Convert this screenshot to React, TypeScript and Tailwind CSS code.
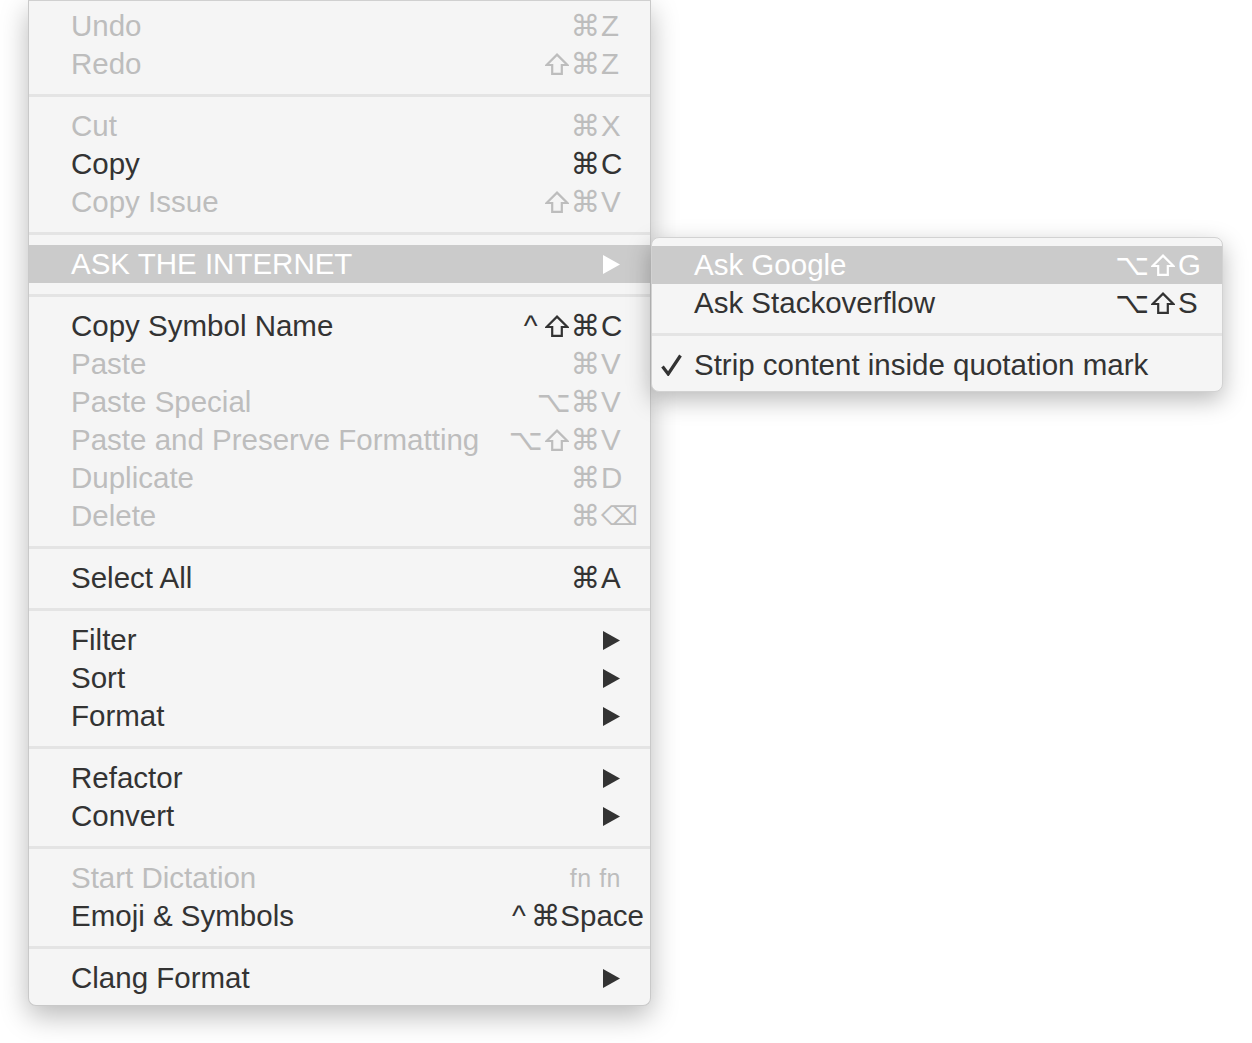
import React from "react";

type Item = {
  label: string;
  mods?: string;
  keyc?: string;
  dis?: boolean;
  arrow?: boolean;
  hi?: boolean;
  keyCls?: string;
  check?: boolean;
};

const FONT = "font-['Liberation_Sans','DejaVu_Sans',sans-serif]";

const mainGroups: Item[][] = [
  [
    { label: "Undo", mods: "⌘", keyc: "Z", dis: true },
    { label: "Redo", mods: "⇧⌘", keyc: "Z", dis: true },
  ],
  [
    { label: "Cut", mods: "⌘", keyc: "X", dis: true },
    { label: "Copy", mods: "⌘", keyc: "C" },
    { label: "Copy Issue", mods: "⇧⌘", keyc: "V", dis: true },
  ],
  [{ label: "ASK THE INTERNET", arrow: true, hi: true }],
  [
    { label: "Copy Symbol Name", mods: "^⇧⌘", keyc: "C" },
    { label: "Paste", mods: "⌘", keyc: "V", dis: true },
    { label: "Paste Special", mods: "⌥⌘", keyc: "V", dis: true },
    { label: "Paste and Preserve Formatting", mods: "⌥⇧⌘", keyc: "V", dis: true },
    { label: "Duplicate", mods: "⌘", keyc: "D", dis: true },
    { label: "Delete", mods: "⌘", keyc: "⌫", dis: true, keyCls: "ml-[1px] w-[23px] text-left text-[26px]" },
  ],
  [{ label: "Select All", mods: "⌘", keyc: "A" }],
  [
    { label: "Filter", arrow: true },
    { label: "Sort", arrow: true },
    { label: "Format", arrow: true },
  ],
  [
    { label: "Refactor", arrow: true },
    { label: "Convert", arrow: true },
  ],
  [
    { label: "Start Dictation", mods: "fn fn", dis: true },
    { label: "Emoji & Symbols", mods: "^⌘", keyc: "Space", keyCls: "text-left -mr-[20px]" },
  ],
  [{ label: "Clang Format", arrow: true }],
];

const subGroups: Item[][] = [
  [
    { label: "Ask Google", mods: "⌥⇧", keyc: "G", hi: true },
    { label: "Ask Stackoverflow", mods: "⌥⇧", keyc: "S" },
  ],
  [{ label: "Strip content inside quotation mark", check: true }],
];

function Arrow({ white }: { white?: boolean }) {
  return (
    <svg width="17" height="19" viewBox="0 0 17 19" className="mr-[4px] block">
      <path d="M0 0 L17 9.5 L0 19 Z" fill={white ? "#ffffff" : "#333333"} />
    </svg>
  );
}

function ShiftIcon() {
  return (
    <svg width="24" height="22" viewBox="0 0 24 22" className="mx-[2px] block">
      <path
        d="M12 1.6 L22.4 12 L16.8 12 L16.8 20.8 L7.2 20.8 L7.2 12 L1.6 12 Z"
        fill="none"
        stroke="currentColor"
        strokeWidth="2.2"
        strokeLinejoin="miter"
      />
    </svg>
  );
}

function Check() {
  return (
    <svg width="21" height="22" viewBox="0 0 21 22" className="block">
      <path
        d="M1.5 12.5 L7.2 20 L19.5 1.5"
        fill="none"
        stroke="#333333"
        strokeWidth="3.2"
        strokeLinecap="butt"
        strokeLinejoin="miter"
      />
    </svg>
  );
}

function Mods({ mods }: { mods: string }) {
  if (mods === "fn fn") {
    return <span className="mr-[3px] text-[25px] tracking-[0.5px]">fn fn</span>;
  }
  return (
    <span className="flex items-center">
      {Array.from(mods).map((c, i) =>
        c === "⇧" ? (
          <ShiftIcon key={i} />
        ) : c === "^" ? (
          <span key={i} className="mr-[5px]">^</span>
        ) : (
          <span key={i}>{c}</span>
        )
      )}
    </span>
  );
}

function Row({ it, padR }: { it: Item; padR: string }) {
  const color = it.hi ? "text-white" : it.dis ? "text-[#bdbdbd]" : "text-[#333333]";
  return (
    <div
      className={`relative flex h-[38px] items-center justify-between pl-[42px] ${padR} ${
        it.hi ? "bg-[#cbcbcb]" : ""
      } ${color}`}
    >
      {it.check && (
        <span className="absolute left-[9px] top-[8px]">
          <Check />
        </span>
      )}
      <span className="whitespace-nowrap leading-[38px]">{it.label}</span>
      {it.arrow ? (
        <Arrow white={it.hi} />
      ) : it.mods !== undefined ? (
        <span className="flex items-center whitespace-nowrap leading-[38px]">
          <Mods mods={it.mods} />
          {it.keyc !== undefined && (
            <span className={`whitespace-nowrap ${it.keyCls ?? "ml-[1px] w-[23px] text-left"}`}>{it.keyc}</span>
          )}
        </span>
      ) : null}
    </div>
  );
}

function Sep() {
  return (
    <div className="pt-[11px] pb-[10px]">
      <div className="h-[3px] bg-[#e4e4e4]" />
    </div>
  );
}

export default function App() {
  return (
    <div className={`relative h-[1043px] w-[1252px] overflow-hidden bg-white ${FONT} text-[29.5px]`}>
      <div className="pl-[28px]">
        <div className="w-[623px] rounded-b-[8px] border border-[#c9c9c9] border-t-[#d0d0d0] bg-[#f5f5f5] pt-[6px] pb-[8px] shadow-[0_10px_28px_rgba(0,0,0,0.28)]">
          {mainGroups.map((g, gi) => (
            <div key={gi}>
              {gi > 0 && <Sep />}
              {g.map((it, i) => (
                <Row key={i} it={it} padR="pr-[26px]" />
              ))}
            </div>
          ))}
        </div>
      </div>
      <div className="absolute left-[651px] top-[237px] w-[572px] rounded-[8px] border border-[#d2d2d2] bg-[#f5f5f5] pt-[8px] pb-[7px] shadow-[0_8px_24px_rgba(0,0,0,0.28)]">
        {subGroups.map((g, gi) => (
          <div key={gi}>
            {gi > 0 && <Sep />}
            {g.map((it, i) => (
              <Row key={i} it={it} padR="pr-[21px]" />
            ))}
          </div>
        ))}
      </div>
    </div>
  );
}
